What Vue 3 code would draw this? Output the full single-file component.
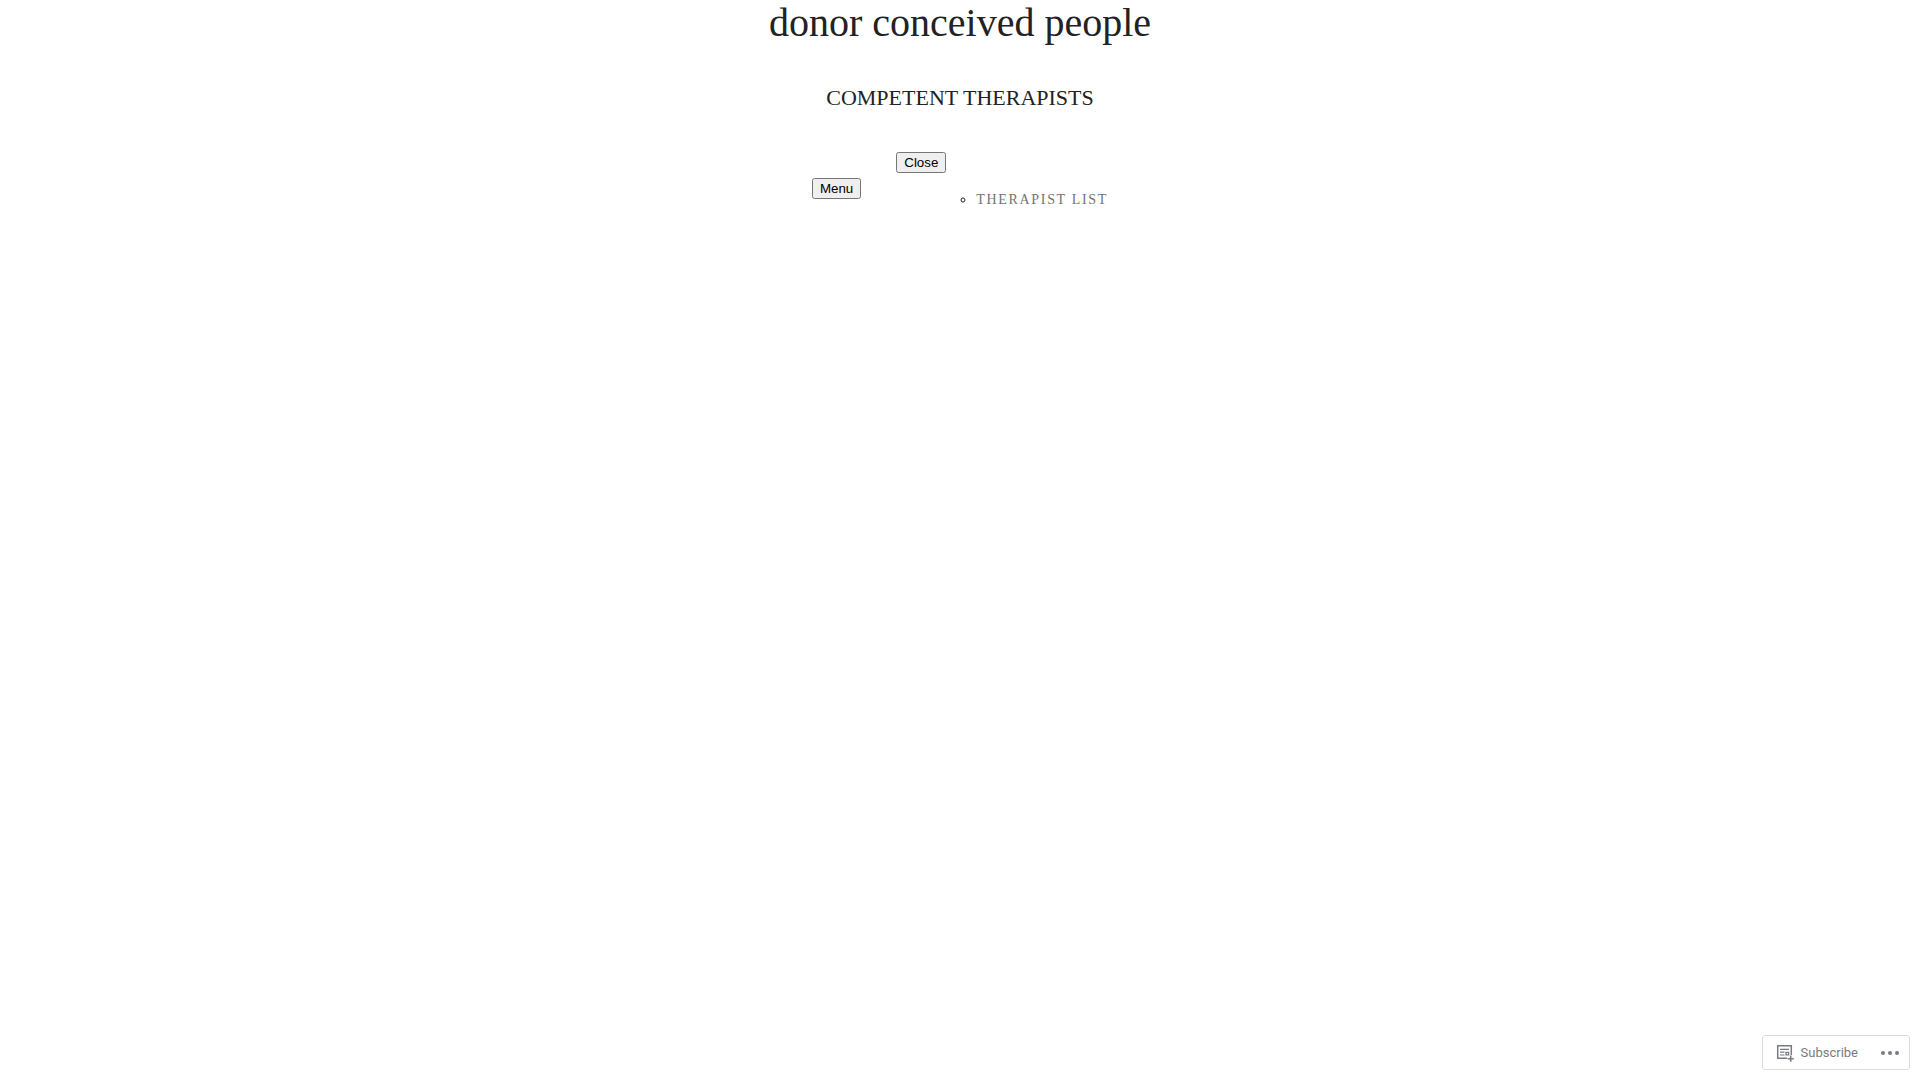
<template>
  <div class="page">
    <header class="site-header">
      <h1 class="title"><a href="#">donor conceived people</a></h1>
      <p class="tagline">COMPETENT THERAPISTS</p>
      <nav class="nav" aria-label="Main">
        <button type="button">Menu</button>
        <div class="panel">
          <button type="button">Close</button>
          <ul>
            <li><a href="#">THERAPIST LIST</a></li>
          </ul>
        </div>
      </nav>
    </header>
    <aside class="actionbar">
      <button type="button" class="subscribe">
        <svg width="20" height="20" viewBox="0 0 20 20" fill="none" stroke="currentColor" aria-hidden="true">
          <path d="M12 15.2H2.7V2.7h13.6V12" stroke-width="1.5" />
          <path d="M5 6.3h9M5 9.2h4.5M5 12h4.5" stroke-width="1.2" />
          <path d="M11 9.3h2.6v2.6H11z" stroke-width="1.3" />
          <path d="M15.7 12.6v6.2M12.6 15.7h6.2" stroke-width="1.6" />
        </svg>
        <span>Subscribe</span>
      </button>
      <button type="button" class="more" aria-label="More">
        <svg width="24" height="24" viewBox="0 0 24 24" fill="currentColor" aria-hidden="true">
          <circle cx="5" cy="12" r="2" />
          <circle cx="12" cy="12" r="2" />
          <circle cx="19" cy="12" r="2" />
        </svg>
      </button>
    </aside>
  </div>
</template>

<script setup>
</script>

<style>
body {
  margin: 0;
  background: #fff;
}
</style>

<style scoped>
.page {
  font-family: "Liberation Serif", "Times New Roman", serif;
  color: #222;
}
.site-header {
  display: flex;
  flex-direction: column;
  align-items: center;
}
.title {
  margin: 0;
  font-size: 40px;
  line-height: 46px;
  font-weight: 400;
}
.title a {
  color: inherit;
  text-decoration: none;
}
.tagline {
  margin: 38px 0 0;
  font-size: 22px;
  line-height: 28px;
}
.nav {
  display: flex;
  align-items: center;
  gap: 35px;
  margin-top: 40px;
}
.nav button {
  font-family: "Liberation Sans", Arial, sans-serif;
}
.panel ul {
  list-style: circle;
  margin: 16px 0 14px;
  padding-left: 80px;
  font-size: 14px;
  line-height: 22px;
}
.panel a {
  color: #737373;
  letter-spacing: 0.12em;
  text-decoration: none;
}
.actionbar {
  position: fixed;
  right: 10px;
  bottom: 10px;
  display: flex;
  align-items: center;
  box-sizing: border-box;
  height: 35px;
  background: #fff;
  border: 1px solid #dcdcde;
  border-radius: 3px;
}
.actionbar button {
  display: flex;
  align-items: center;
  padding: 0;
  border: 0;
  background: none;
  color: #787c82;
  font: 400 13px Roboto, "Open Sans", sans-serif;
}
.actionbar .subscribe {
  gap: 6px;
  margin-left: 12px;
}
.actionbar .more {
  margin: 0 7px 0 20px;
}
</style>
